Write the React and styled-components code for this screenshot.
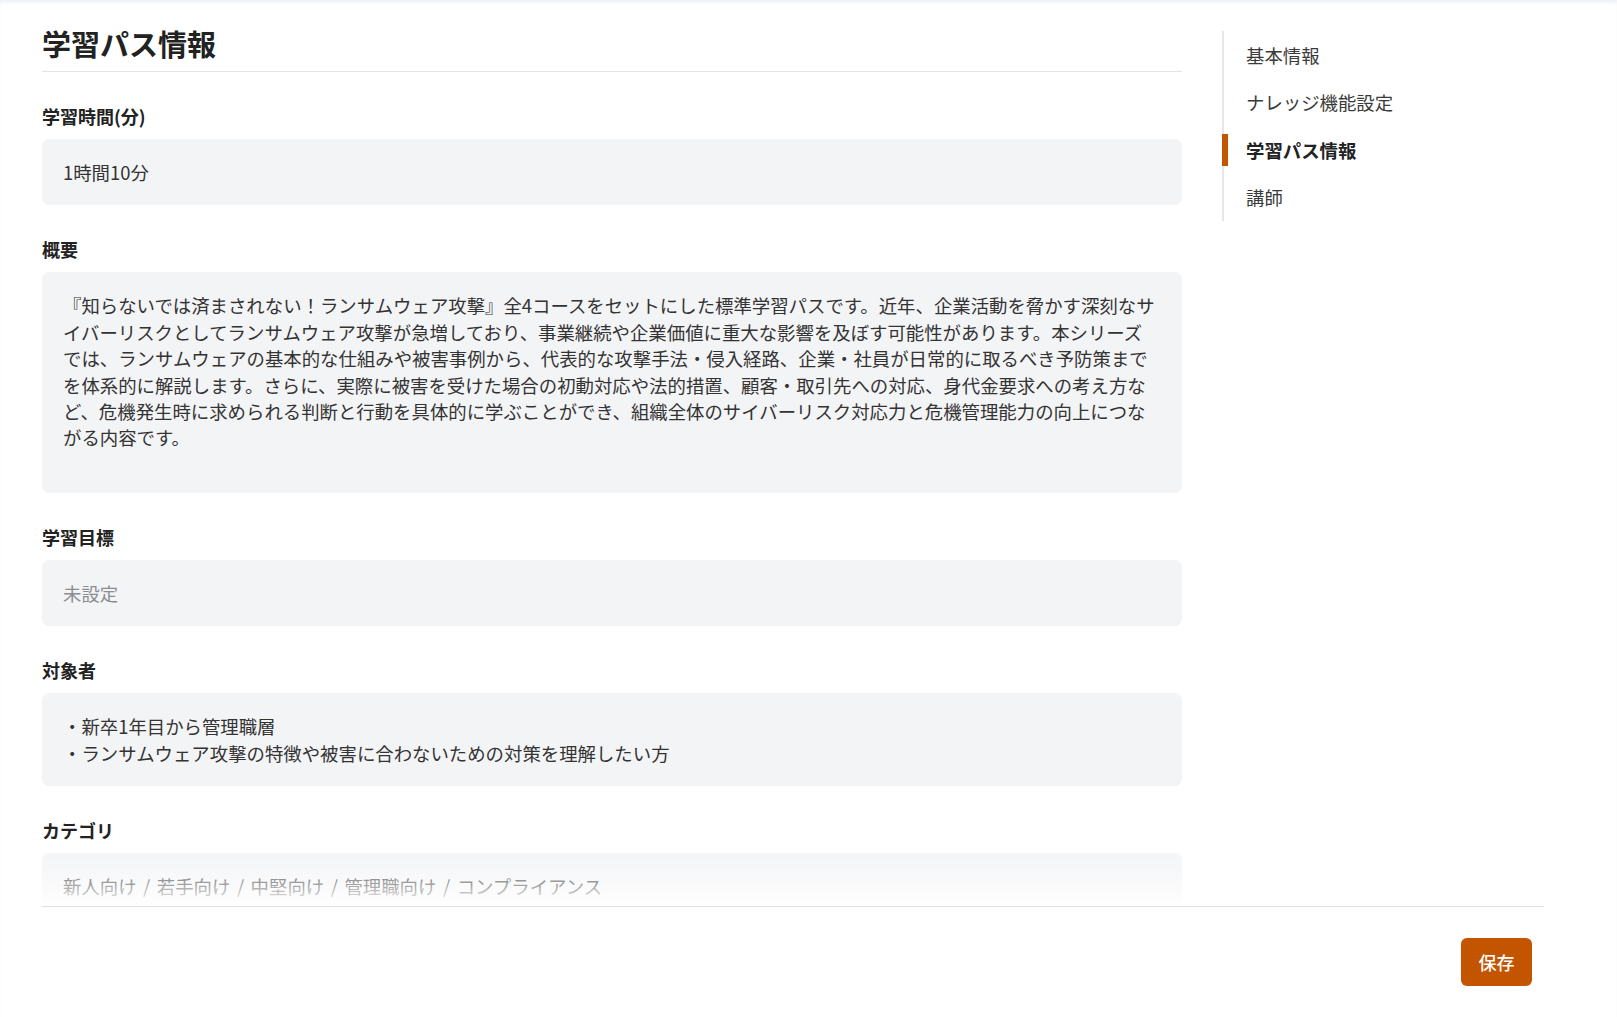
import React from "react";
import styled, { createGlobalStyle } from "styled-components";

const GlobalStyle = createGlobalStyle`
  html, body {
    margin: 0;
    padding: 0;
    background: #fff;
  }
  body {
    font-family: "Noto Sans CJK JP", "Noto Sans", sans-serif;
    color: #333;
  }
`;

const fields = [
  { label: "学習時間(分)", value: "1時間10分" },
  {
    label: "概要",
    value:
      "『知らないでは済まされない！ランサムウェア攻撃』全4コースをセットにした標準学習パスです。近年、企業活動を脅かす深刻なサイバーリスクとしてランサムウェア攻撃が急増しており、事業継続や企業価値に重大な影響を及ぼす可能性があります。本シリーズでは、ランサムウェアの基本的な仕組みや被害事例から、代表的な攻撃手法・侵入経路、企業・社員が日常的に取るべき予防策までを体系的に解説します。さらに、実際に被害を受けた場合の初動対応や法的措置、顧客・取引先への対応、身代金要求への考え方など、危機発生時に求められる判断と行動を具体的に学ぶことができ、組織全体のサイバーリスク対応力と危機管理能力の向上につながる内容です。",
    tall: true,
  },
  { label: "学習目標", value: "未設定", empty: true },
  {
    label: "対象者",
    value: "・新卒1年目から管理職層\n・ランサムウェア攻撃の特徴や被害に合わないための対策を理解したい方",
  },
  { label: "カテゴリ", value: "新人向け / 若手向け / 中堅向け / 管理職向け / コンプライアンス" },
];

const navItems = ["基本情報", "ナレッジ機能設定", "学習パス情報", "講師"];

const App = () => {
  return (
    <>
      <GlobalStyle />
      <Page>
        <Scroll>
          <Row>
            <Main>
              <Title>学習パス情報</Title>
              <Fields>
                {fields.map((f) => (
                  <Field key={f.label}>
                    <Label>{f.label}</Label>
                    <Box $tall={f.tall} $empty={f.empty}>
                      {f.value}
                    </Box>
                  </Field>
                ))}
              </Fields>
            </Main>
            <Side>
              {navItems.map((n) => (
                <NavItem key={n} $active={n === "学習パス情報"}>
                  {n}
                </NavItem>
              ))}
            </Side>
          </Row>
          <Fade />
        </Scroll>
        <Footer>
          <SaveButton>保存</SaveButton>
        </Footer>
      </Page>
    </>
  );
};
export default App;

const Page = styled.div`
  min-height: 1017px;
  box-shadow: inset 0 4px 4px -2px #eceef2;
  padding-left: 42px;
  box-sizing: border-box;
`;

const Scroll = styled.div`
  position: relative;
  width: 1502px;
  height: 906px;
  overflow: hidden;
`;

const Row = styled.div`
  display: flex;
  gap: 40px;
  align-items: flex-start;
`;

const Main = styled.div`
  width: 1140px;
  flex-shrink: 0;
  padding-top: 23px;
`;

const Title = styled.h1`
  margin: 0;
  font-size: 29px;
  line-height: 40px;
  font-weight: 700;
  color: #222;
  padding-bottom: 8px;
  border-bottom: 1px solid #e2e4e8;
`;

const Fields = styled.div`
  display: flex;
  flex-direction: column;
  gap: 31px;
  padding-top: 31px;
`;

const Field = styled.div`
  display: flex;
  flex-direction: column;
  gap: 10px;
`;

const Label = styled.div`
  font-size: 18px;
  line-height: 26px;
  font-weight: 700;
  color: #222;
`;

const Box = styled.div`
  background: #f3f4f6;
  border-radius: 7px;
  padding: 20px 27px ${(p) => (p.$tall ? "42px" : "20px")} 21px;
  font-size: 18.4px;
  line-height: 26.4px;
  word-spacing: 2.4px;
  color: ${(p) => (p.$empty ? "#8a8d92" : "#333")};
  white-space: pre-wrap;
  line-break: strict;
`;

const Side = styled.nav`
  width: 322px;
  margin-top: 31px;
  border-left: 2px solid #e6e7ea;
  display: flex;
  flex-direction: column;
`;

const NavItem = styled.div`
  position: relative;
  height: 47.5px;
  display: flex;
  align-items: center;
  padding-left: 22px;
  font-size: 18.4px;
  font-weight: ${(p) => (p.$active ? 700 : 400)};
  color: ${(p) => (p.$active ? "#222" : "#3a3a3a")};

  &::before {
    content: "";
    display: ${(p) => (p.$active ? "block" : "none")};
    position: absolute;
    left: -2px;
    top: 8px;
    bottom: 8px;
    width: 6px;
    background: #c45500;
  }
`;

const Fade = styled.div`
  position: absolute;
  left: 0;
  right: 0;
  bottom: 0;
  height: 62px;
  background: linear-gradient(
    rgba(255, 255, 255, 0),
    rgba(255, 255, 255, 0.55) 66%,
    #fff
  );
  pointer-events: none;
`;

const Footer = styled.div`
  width: 1502px;
  border-top: 1px solid #dde0e7;
  display: flex;
  justify-content: flex-end;
  padding: 31px 12px 0 0;
  box-sizing: border-box;
`;

const SaveButton = styled.button`
  width: 71px;
  height: 48px;
  border: 0;
  border-radius: 6px;
  background: #c45500;
  color: #fff;
  font-family: "Noto Sans CJK JP", sans-serif;
  font-size: 18px;
  font-weight: 500;
  cursor: pointer;
`;
